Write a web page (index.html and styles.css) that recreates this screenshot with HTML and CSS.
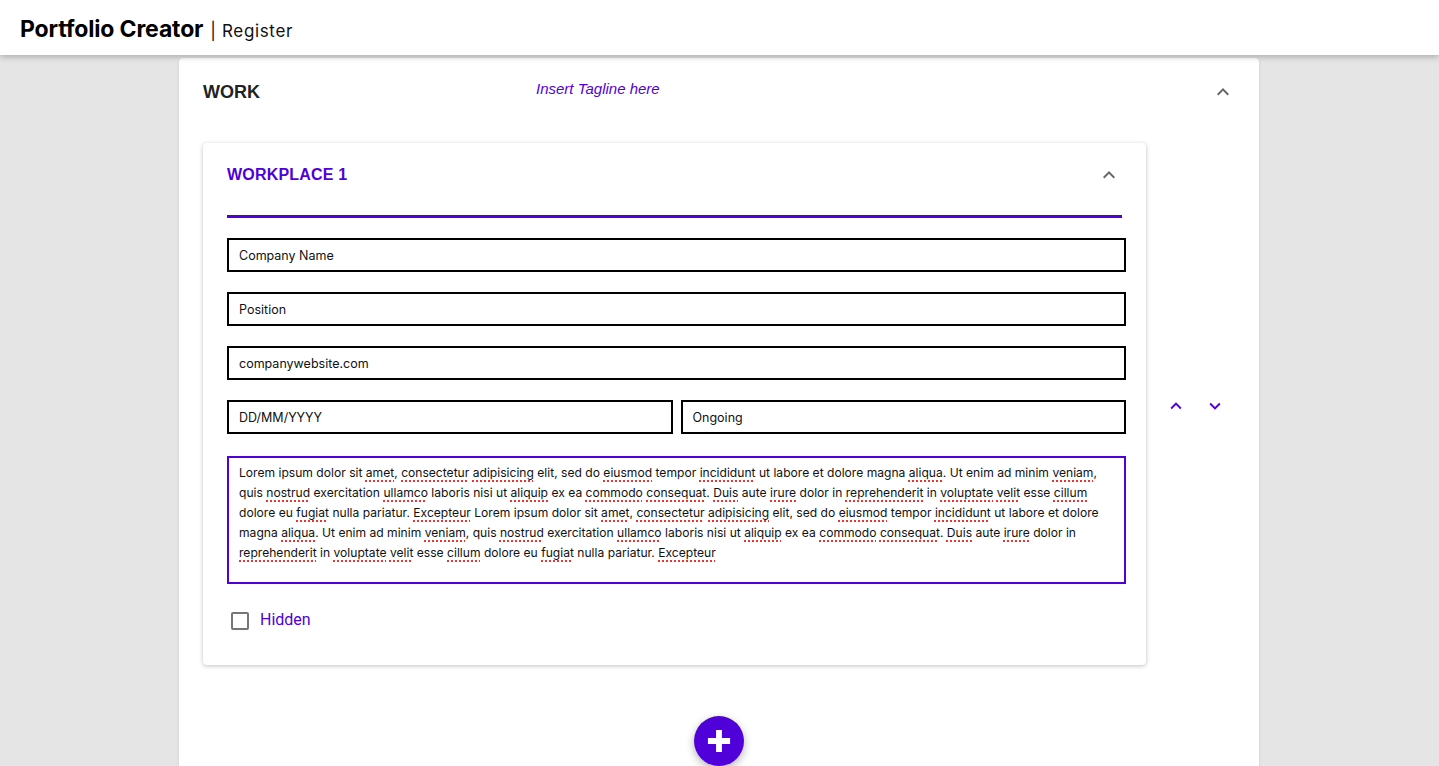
FILE: index.html
```html
<!DOCTYPE html>
<html lang="en">
<head>
<meta charset="utf-8">
<title>Portfolio Creator | Register</title>
<link rel="stylesheet" href="styles.css">
</head>
<body>
<header class="topbar">
  <span class="brand">Portfolio Creator</span>
  <span class="sep">|</span>
  <span class="page">Register</span>
</header>
<main class="wrap">
  <section class="card">
    <div class="card-head">
      <h2 class="title">WORK</h2>
      <span class="tagline">Insert Tagline here</span>
      <svg class="chev gray" viewBox="0 0 24 24" width="24" height="24"><path d="M7.41 15.41 12 10.83l4.59 4.58L18 14l-6-6-6 6z"/></svg>
    </div>
    <div class="row">
      <div class="item">
        <div class="item-head">
          <h3 class="item-title">WORKPLACE 1</h3>
          <svg class="chev gray" viewBox="0 0 24 24" width="24" height="24"><path d="M7.41 15.41 12 10.83l4.59 4.58L18 14l-6-6-6 6z"/></svg>
        </div>
        <div class="rule"></div>
        <div class="fields">
          <div class="field">Company Name</div>
          <div class="field">Position</div>
          <div class="field">companywebsite.com</div>
          <div class="pair">
            <div class="field">DD/MM/YYYY</div>
            <div class="field">Ongoing</div>
          </div>
          <div class="area">Lorem ipsum dolor sit <span class="sp">amet</span>, <span class="sp">consectetur</span> <span class="sp">adipisicing</span> elit, sed do <span class="sp">eiusmod</span> tempor <span class="sp">incididunt</span> ut labore et dolore magna <span class="sp">aliqua</span>. Ut enim ad minim <span class="sp">veniam</span>, quis <span class="sp">nostrud</span> exercitation <span class="sp">ullamco</span> laboris nisi ut <span class="sp">aliquip</span> ex ea <span class="sp">commodo</span> <span class="sp">consequat</span>. <span class="sp">Duis</span> aute <span class="sp">irure</span> dolor in <span class="sp">reprehenderit</span> in <span class="sp">voluptate</span> <span class="sp">velit</span> esse <span class="sp">cillum</span> dolore eu <span class="sp">fugiat</span> nulla pariatur. <span class="sp">Excepteur</span> Lorem ipsum dolor sit <span class="sp">amet</span>, <span class="sp">consectetur</span> <span class="sp">adipisicing</span> elit, sed do <span class="sp">eiusmod</span> tempor <span class="sp">incididunt</span> ut labore et dolore magna <span class="sp">aliqua</span>. Ut enim ad minim <span class="sp">veniam</span>, quis <span class="sp">nostrud</span> exercitation <span class="sp">ullamco</span> laboris nisi ut <span class="sp">aliquip</span> ex ea <span class="sp">commodo</span> <span class="sp">consequat</span>. <span class="sp">Duis</span> aute <span class="sp">irure</span> dolor in <span class="sp">reprehenderit</span> in <span class="sp">voluptate</span> <span class="sp">velit</span> esse <span class="sp">cillum</span> dolore eu <span class="sp">fugiat</span> nulla pariatur. <span class="sp">Excepteur</span></div>
        </div>
        <label class="check">
          <span class="box"></span>
          <span class="check-label">Hidden</span>
        </label>
      </div>
      <div class="movers">
        <svg class="chev purple" viewBox="0 0 24 24" width="22" height="22"><path d="M7.41 15.41 12 10.83l4.59 4.58L18 14l-6-6-6 6z"/></svg>
        <svg class="chev purple" viewBox="0 0 24 24" width="22" height="22"><path d="M7.41 8.59 12 13.17l4.59-4.58L18 10l-6 6-6-6z"/></svg>
      </div>
    </div>
    <div class="add-row">
      <button class="fab" type="button" aria-label="Add">
        <svg viewBox="0 0 24 24" width="28" height="28"><path d="M9.5 2.5h5v7h7v5h-7v7h-5v-7h-7v-5h7z" fill="#fff"/></svg>
      </button>
    </div>
  </section>
</main>
</body>
</html>
```
FILE: styles.css
```css
* { box-sizing: border-box; }
html, body { margin: 0; padding: 0; }
body {
  background: #e5e5e5;
  font-family: Inter, "Liberation Sans", sans-serif;
  color: #111;
  height: 766px;
  overflow: hidden;
}
.topbar {
  height: 55px;
  background: #fff;
  display: flex;
  align-items: baseline;
  padding: 15px 20px 0;
  box-shadow: 0 2px 6px rgba(0,0,0,0.25);
  position: relative;
  z-index: 2;
}
.brand { font-size: 23px; font-weight: 700; color: #000; letter-spacing: -0.15px; }
.sep { font-size: 17px; margin: 0 6px 0 7px; color: #111; }
.page { font-size: 17px; letter-spacing: 0.65px; color: #111; }
.wrap {
  display: flex;
  justify-content: center;
  padding-top: 3px;
  padding-right: 1px;
}
.card {
  width: 1080px;
  background: #fff;
  border-radius: 4px;
  box-shadow: 0 1px 3px rgba(0,0,0,0.12);
  padding: 0 24px 0 24px;
  height: 720px;
}
.card-head {
  display: flex;
  align-items: center;
  height: 68px;
  position: relative;
}
.title {
  margin: 0;
  font-family: "Liberation Sans", Arial, sans-serif;
  font-size: 18px;
  font-weight: 700;
  color: #222;
  width: 333px;
}
.tagline {
  font-family: "Liberation Sans", Arial, sans-serif;
  font-style: italic;
  font-size: 15px;
  color: #5000d8;
  flex: 1;
  position: relative;
  top: -4px;
}
.chev { display: block; }
.chev.gray { fill: #666; }
.chev.purple { fill: #5000d8; }
.card-head .chev { margin-right: 0; }
.row {
  display: flex;
  align-items: center;
  margin-top: 17px;
}
.item {
  width: 943px;
  background: #fff;
  border-radius: 4px;
  box-shadow: 0 1px 4px rgba(0,0,0,0.25);
  padding: 0 20px 35px 24px;
}
.item-head {
  display: flex;
  align-items: center;
  justify-content: space-between;
  height: 64px;
}
.item-title {
  margin: 0;
  font-family: "Liberation Sans", Arial, sans-serif;
  font-size: 16px;
  font-weight: 700;
  color: #5000d8;
  letter-spacing: 0.2px;
}
.item-head .chev { margin-right: 5px; }
.rule {
  height: 3px;
  background: #5000d8;
  margin-top: 8px;
  margin-right: 4px;
}
.fields {
  display: flex;
  flex-direction: column;
  gap: 20px;
  margin-top: 20px;
}
.field {
  height: 34px;
  border: 2px solid #000;
  display: flex;
  align-items: center;
  padding-left: 10px;
  font-size: 12.5px;
  color: #111;
}
.pair {
  display: flex;
  gap: 8px;
}
.pair .field { flex: 1; }
.area {
  height: 128px;
  border: 2px solid #5000d8;
  padding: 5px 10px;
  font-size: 12.1px;
  line-height: 20px;
  color: #111;
  margin-top: 2px;
}
.sp {
  text-decoration: underline dotted #e33;
  text-decoration-thickness: 1.5px;
  text-underline-offset: 3px;
}
.check {
  display: flex;
  align-items: center;
  margin-top: 27px;
  padding-left: 4px;
}
.box {
  width: 18px;
  height: 18px;
  border: 2px solid #757575;
  border-radius: 2px;
}
.check-label {
  margin-left: 11px;
  font-family: Roboto, "Liberation Sans", sans-serif;
  font-size: 16px;
  color: #5000d8;
  position: relative;
  top: -1px;
}
.movers {
  display: flex;
  gap: 17px;
  margin-left: 19px;
  margin-top: 3px;
}
.add-row {
  display: flex;
  justify-content: center;
  margin-top: 51px;
}
.fab {
  width: 50px;
  height: 50px;
  border-radius: 50%;
  border: none;
  background: #5000d8;
  display: flex;
  align-items: center;
  justify-content: center;
  padding: 0;
  box-shadow: 0 3px 8px rgba(0,0,0,0.3);
}
```
